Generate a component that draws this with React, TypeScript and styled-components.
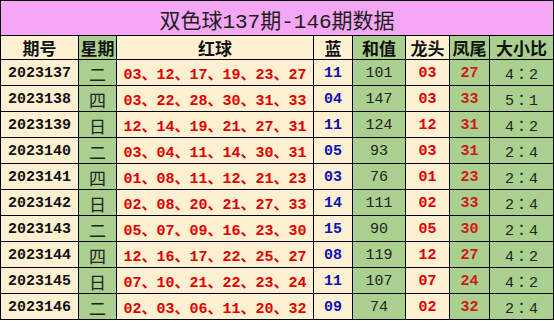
import React from "react";
import styled, { createGlobalStyle } from "styled-components";

const Global = createGlobalStyle`
  html, body { margin: 0; padding: 0; background: #ffffff; }
  body { font-family: "Liberation Mono", "Noto Sans CJK SC", monospace; }
`;

const CREAM = "#FEF1D2";
const GREEN = "#A9D08E";
const PINK = "#F5A6F4";

const Table = styled.div`
  display: grid;
  grid-template-columns: 77px 37px 196px 38px 52px 43px 39px 63px;
  grid-template-rows: 34px 23px repeat(10, 25px);
  gap: 1px;
  background: #000;
  padding: 1px;
  width: 554px;
  box-sizing: border-box;
`;

const TitleCell = styled.div`
  grid-column: 1 / -1;
  background: ${PINK};
  display: flex;
  align-items: center;
  justify-content: center;
  font-family: "Liberation Mono", "Noto Sans CJK SC", monospace;
  font-size: 21px;
  color: #1c1c1c;
  padding-top: 1px;
`;

const HeadCell = styled.div<{ $bg: string }>`
  background: ${(p) => p.$bg};
  display: flex;
  align-items: center;
  justify-content: center;
  font-family: "Noto Sans CJK SC", sans-serif;
  font-weight: 700;
  font-size: 17px;
  color: #111;
  white-space: nowrap;
`;

const Cell = styled.div<{ $bg: string; $color?: string; $bold?: boolean }>`
  background: ${(p) => p.$bg};
  display: flex;
  align-items: center;
  justify-content: center;
  font-family: "Liberation Mono", "Noto Sans CJK SC", monospace;
  font-weight: ${(p) => (p.$bold ? 700 : 400)};
  font-size: 15px;
  color: ${(p) => p.$color ?? "#111"};
  white-space: nowrap;
  padding-top: 1px;
`;

const WeekCell = styled(Cell)`
  font-family: "Noto Sans CJK SC", sans-serif;
  font-weight: 400;
  font-size: 17px;
  color: #222;
`;

const RatioCell = styled(Cell)`
  font-family: "Liberation Mono", "Noto Sans CJK JP", monospace;
`;

type Row = [string, string, string, string, string, string, string, string];

const rows: Row[] = [
  ["2023137", "二", "03、12、17、19、23、27", "11", "101", "03", "27", "4：2"],
  ["2023138", "四", "03、22、28、30、31、33", "04", "147", "03", "33", "5：1"],
  ["2023139", "日", "12、14、19、21、27、31", "11", "124", "12", "31", "4：2"],
  ["2023140", "二", "03、04、11、14、30、31", "05", "93", "03", "31", "2：4"],
  ["2023141", "四", "01、08、11、12、21、23", "03", "76", "01", "23", "2：4"],
  ["2023142", "日", "02、08、20、21、27、33", "14", "111", "02", "33", "2：4"],
  ["2023143", "二", "05、07、09、16、23、30", "15", "90", "05", "30", "2：4"],
  ["2023144", "四", "12、16、17、22、25、27", "08", "119", "12", "27", "4：2"],
  ["2023145", "日", "07、10、21、22、23、24", "11", "107", "07", "24", "4：2"],
  ["2023146", "二", "02、03、06、11、20、32", "09", "74", "02", "32", "2：4"],
];

const headers: [string, string][] = [
  ["期号", CREAM],
  ["星期", GREEN],
  ["红球", CREAM],
  ["蓝", CREAM],
  ["和值", GREEN],
  ["龙头", CREAM],
  ["凤尾", GREEN],
  ["大小比", GREEN],
];

const RED = "#E00000";
const BLUE = "#1010B8";

export default function App() {
  return (
    <>
      <Global />
      <Table>
        <TitleCell>双色球137期-146期数据</TitleCell>
        {headers.map(([t, bg]) => (
          <HeadCell key={t} $bg={bg}>
            {t}
          </HeadCell>
        ))}
        {rows.map((r) => (
          <React.Fragment key={r[0]}>
            <Cell $bg={CREAM} $bold>{r[0]}</Cell>
            <WeekCell $bg={GREEN}>{r[1]}</WeekCell>
            <Cell $bg={CREAM} $bold $color={RED}>{r[2]}</Cell>
            <Cell $bg={CREAM} $bold $color={BLUE}>{r[3]}</Cell>
            <Cell $bg={GREEN} $color="#222">{r[4]}</Cell>
            <Cell $bg={CREAM} $bold $color={RED}>{r[5]}</Cell>
            <Cell $bg={GREEN} $bold $color="#D41818">{r[6]}</Cell>
            <RatioCell $bg={GREEN} $color="#222">{r[7]}</RatioCell>
          </React.Fragment>
        ))}
      </Table>
    </>
  );
}
